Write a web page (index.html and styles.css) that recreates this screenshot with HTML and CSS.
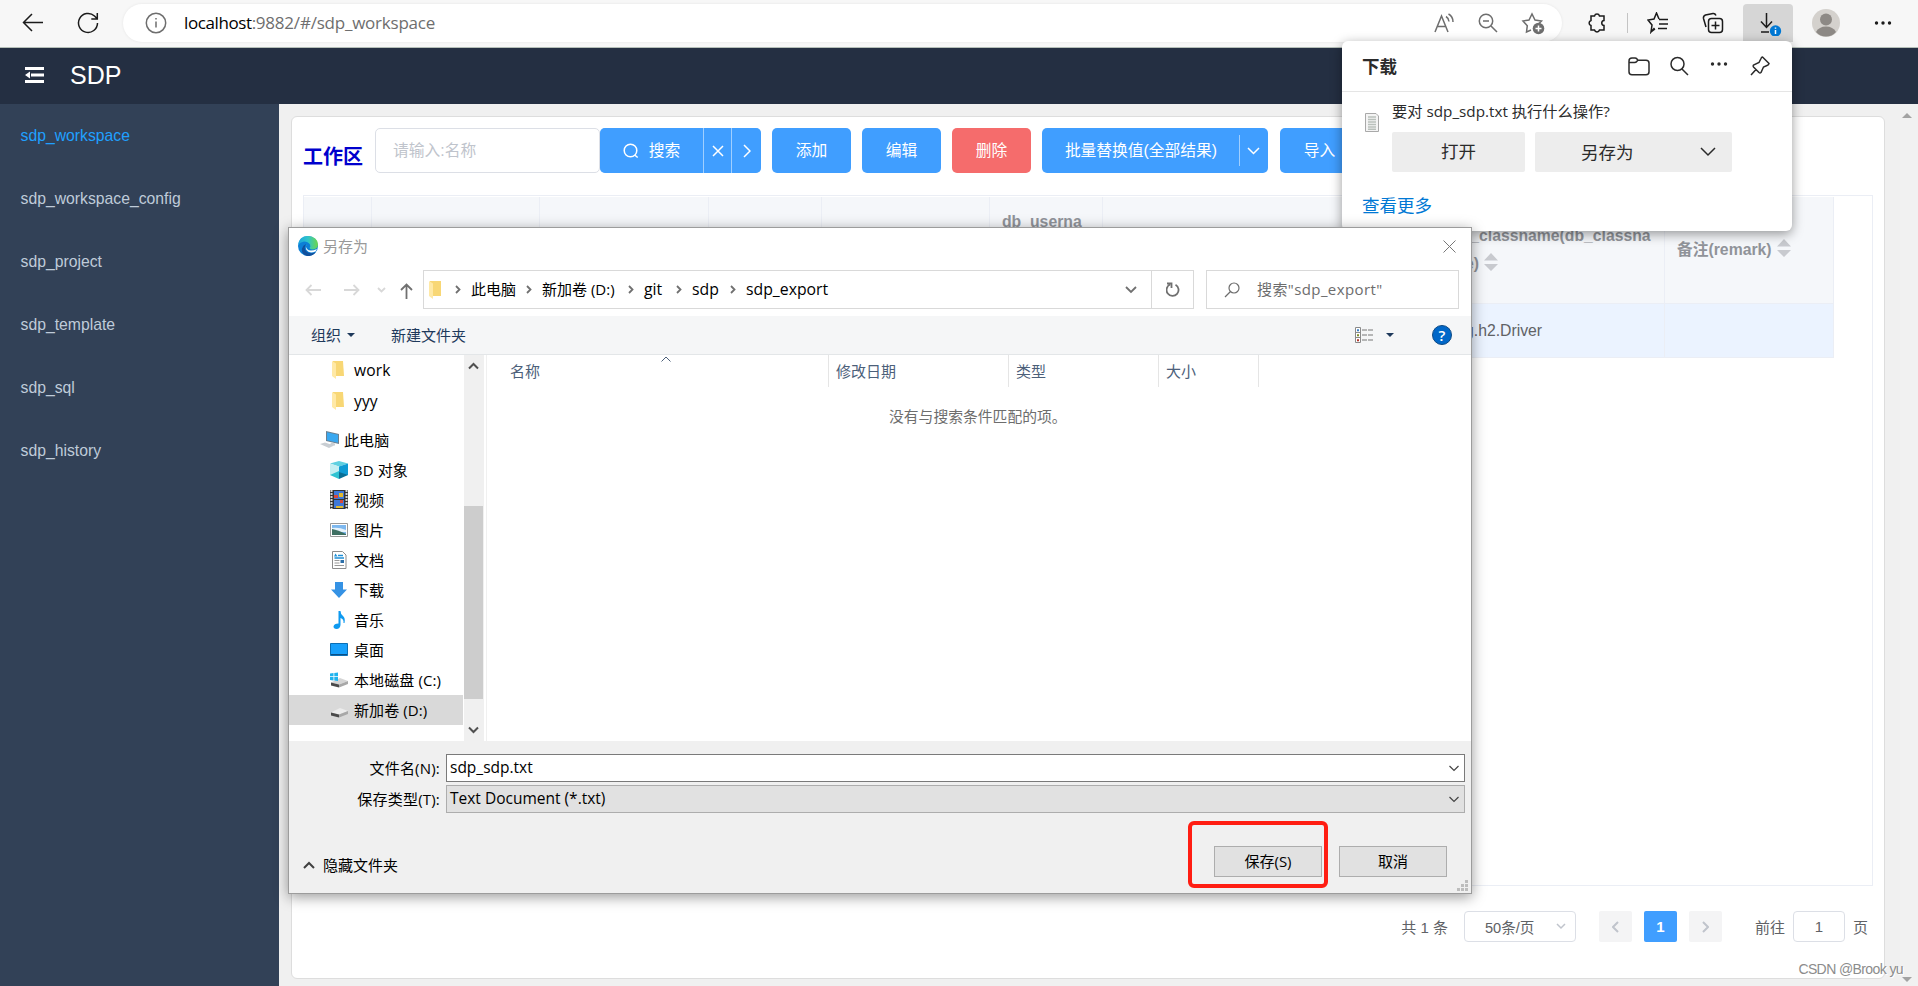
FILE: index.html
```html
<!doctype html>
<html lang="zh-CN">
	<head>
		<title>SDP</title>
		<meta charset="utf-8">
		<link rel="stylesheet" href="styles.css">
	</head>

	<body>
		<!-- BROWSER BAR -->
		<div class="browser">
			<svg class="b-back" width="22" height="22" viewBox="0 0 22 22"><path d="M21 10.500H2M10 2L1.500 10.500l8.500 8.500"/></svg>
			<svg class="b-reload" width="22" height="22" viewBox="0 0 22 22"><path d="M20.500 11a9.500 9.500 0 1 1-3-7l2.500 2.500M20.300 1v6h-6"/></svg>
			<div class="address">
				<svg width="22" height="22" viewBox="0 0 22 22"><circle cx="11" cy="11" r="9.700"/><path d="M11 9.500v6M11 6v1.500"/></svg>
				<span class="url"><b>localhost</b>:9882/#/sdp_workspace</span>
				<div class="address-icons">
					<svg width="22" height="22" viewBox="0 0 22 22"><path d="M2 20L8.500 4 15 20M4.300 14.500h8.500M13 4.500q2.500 1.500 3 5M15.500 2q4.500 2.500 4.500 8"/></svg>
					<svg width="22" height="22" viewBox="0 0 22 22"><circle cx="9" cy="9" r="6.700"/><path d="M14 14l6 6M6 9h6"/></svg>
					<svg width="24" height="24" viewBox="0 0 24 24"><path d="M10 19l-4.500 2 .8-6.300L2 10l6-1 3-6 3 6 6.500 1-2.500 2.500"/><circle class="solid" cx="17.500" cy="17.500" r="5.800"/><path class="white" d="M17.500 14.500v6M14.500 17.500h6"/></svg>
				</div>
			</div>
			<div class="browser-icons">
				<svg width="22" height="22" viewBox="0 0 22 22"><path d="M5 4h3.500a2.600 2.600 0 0 1 5 0H18v4.500c-3 .2-3 4.800 0 5V18h-4.500a2.600 2.600 0 0 1-5 0H5v-4.500a2.600 2.600 0 0 1 0-5z"/></svg>
				<i class="b-sep"></i>
				<svg width="22" height="22" viewBox="0 0 22 22"><path d="M7.500 16L4 20l1-7-4-5 6-1 2.500-6L12 7M12 7.500h9M12 12h9M11 16.500h9M8 17l-4 3"/></svg>
				<svg width="22" height="22" viewBox="0 0 22 22"><rect x="6.500" y="6.500" width="14" height="14" rx="3"/><path d="M13.500 9.500v8M9.500 13.500h8M4 15L1.500 6.500Q1 4 3.500 3L11 1.500q2-.3 3 2"/></svg>
				<div class="b-download">
					<svg width="26" height="26" viewBox="0 0 26 26"><path d="M9.500 3v14M4 11.500l5.500 6 5.500-6M4 22h8"/><circle class="blue" cx="18.500" cy="21" r="5.700"/><path class="white" d="M18.500 20v4M18.500 17.500v1.300"/></svg>
				</div>
				<svg class="b-avatar" width="28" height="28" viewBox="0 0 28 28"><circle class="face-bg" cx="14" cy="14" r="14"/><circle class="face" cx="14" cy="10.500" r="6"/><path class="face" d="M4 23q3-5.500 10-5.500T24 23q-4 4.500-10 4.500T4 23z"/></svg>
				<svg class="dots" width="18" height="6" viewBox="0 0 18 6"><circle cx="2.500" cy="3" r="1.700"/><circle cx="9" cy="3" r="1.700"/><circle cx="15.500" cy="3" r="1.700"/></svg>
			</div>
		</div>

		<!-- APP -->
		<div class="header">
			<svg width="19" height="16" viewBox="0 0 19 16"><path d="M0 0h19v3H0zM6 6.500h13v3H6zM0 13h19v3H0zM5 4.500v7L0 8z"/></svg>
			<span>SDP</span>
		</div>

		<div class="app">
			<ul class="sidebar">
				<li class="active">sdp_workspace</li>
				<li>sdp_workspace_config</li>
				<li>sdp_project</li>
				<li>sdp_template</li>
				<li>sdp_sql</li>
				<li>sdp_history</li>
			</ul>

			<div class="content">
				<div class="card">
					<div class="toolbar">
						<h1>工作区</h1>
						<div class="input">请输入:名称</div>
						<div class="btn-group">
							<div class="btn search"><svg width="16" height="16" viewBox="0 0 16 16"><circle cx="7.500" cy="7.500" r="6.300"/><path d="M12 12.200l2.700 2.300"/></svg>搜索</div>
							<div class="btn clear"><svg width="12" height="12" viewBox="0 0 12 12"><path d="M1 1l10 10M11 1L1 11"/></svg></div>
							<div class="btn more"><svg width="8" height="14" viewBox="0 0 8 14"><path d="M1 1l6 6-6 6"/></svg></div>
						</div>
						<div class="btn">添加</div>
						<div class="btn">编辑</div>
						<div class="btn danger">删除</div>
						<div class="btn batch"><span>批量替换值(全部结果)</span><i></i><svg width="13" height="8" viewBox="0 0 13 8"><path d="M1 1l5.500 5.500L12 1"/></svg></div>
						<div class="btn">导入</div>
					</div>

					<div class="table-wrap">
						<table>
							<colgroup>
								<col class="w68"><col class="w168"><col class="w169"><col class="w113"><col class="w168"><col class="w113"><col class="w336"><col class="w226"><col class="w169">
							</colgroup>
							<tr>
								<th></th><th></th><th></th><th></th><th></th>
								<th>db_username</th>
								<th></th>
								<th>db_classname(db_classname)<svg class="sort" width="14" height="18" viewBox="0 0 14 18"><path d="M0 7.500L7 0l7 7.500zM0 11h14l-7 7z"/></svg></th>
								<th>备注(remark)<svg class="sort" width="14" height="18" viewBox="0 0 14 18"><path d="M0 7.500L7 0l7 7.500zM0 11h14l-7 7z"/></svg></th>
							</tr>
							<tr>
								<td></td><td></td><td></td><td></td><td></td><td></td><td></td>
								<td>org.h2.Driver</td>
								<td></td>
							</tr>
						</table>
					</div>

					<div class="pager">
						<span class="total">共 1 条</span>
						<div class="select">50条/页<svg width="10" height="7" viewBox="0 0 10 7"><path d="M1 1l4 4 4-4"/></svg></div>
						<div class="page"><svg width="7" height="12" viewBox="0 0 7 12"><path d="M6 1L1 6l5 5"/></svg></div>
						<div class="page current">1</div>
						<div class="page"><svg width="7" height="12" viewBox="0 0 7 12"><path d="M1 1l5 5-5 5"/></svg></div>
						<span class="goto">前往</span>
						<div class="jump">1</div>
						<span>页</span>
					</div>
				</div>
			</div>
			<div class="page-scroll"><i class="up"></i><i class="down"></i></div>
		</div>

		<!-- DOWNLOADS -->
		<div class="downloads">
			<div class="dl-head">
				<h2>下载</h2>
				<svg width="22" height="20" viewBox="0 0 22 20"><path d="M1 5q0-3 3-3h3q1.200 0 2 1l1 1.200h8q3 0 3 3v8.500q0 3-3 3H4q-3 0-3-3zM1 6.500h5.500q1.500 0 2.200-1L10 4.200"/></svg>
				<svg width="19" height="20" viewBox="0 0 19 20"><circle cx="7.500" cy="8" r="6.500"/><path d="M12 13l6 6"/></svg>
				<svg class="dots" width="18" height="6" viewBox="0 0 18 6"><circle cx="2.500" cy="3" r="1.700"/><circle cx="9" cy="3" r="1.700"/><circle cx="15.500" cy="3" r="1.700"/></svg>
				<svg width="20" height="20" viewBox="0 0 20 20"><path d="M12.500 1L19 7.500q-.3 1.500-2 2L13.500 11l-2.500 5.500q-1 .8-2 0L3.500 11q-.8-1 0-2L9 6.500 11 2.500Q11.500 1 12.500 1zM6 13.500L1 19"/></svg>
			</div>
			<div class="dl-item">
				<svg width="14" height="19" viewBox="0 0 14 19"><path class="sheet" d="M.5.500h10.500l2.500 2.500v15.500H.5z"/><path class="lines" d="M3 4h8M3 6.500h8M3 9h8M3 11.500h8M3 14h8M3 16.200h8"/></svg>
				<div class="dl-body">
					<p>要对 sdp_sdp.txt 执行什么操作?</p>
					<div class="dl-actions">
						<div class="dl-open">打开</div>
						<div class="dl-save">另存为<svg width="16" height="10" viewBox="0 0 16 10"><path d="M1 1l7 7 7-7"/></svg></div>
					</div>
				</div>
			</div>
			<div class="dl-more">查看更多</div>
		</div>

		<!-- SAVE AS DIALOG -->
		<div class="dialog">
			<div class="dlg-title">
				<svg width="20" height="20" viewBox="0 0 20 20">
					<defs>
						<linearGradient id="eg" x1="0" x2="1"><stop offset="0" stop-color="#1ba3e0"/><stop offset=".5" stop-color="#2fc5c9"/><stop offset="1" stop-color="#6fd64a"/></linearGradient>
					</defs>
					<circle cx="10" cy="10" r="10" fill="#0c7fd6"/>
					<path d="M0 9Q1 0 10 0q9.500.5 10 8.500-.3 4.500-5 5-3 0-3.500-1.500 1.500-1.500.5-3.500Q10 5.500 6 5.500 2 6 0 9z" fill="url(#eg)"/>
					<path d="M8 8q-3 5 1 8 4 2.500 9 0-3 4.500-9 4-6-2-5-7.500Q5 9 8 8z" fill="#11509c"/>
					<path d="M9 8.500q-2 2 0 4.500 3 3 10 0l-1.500 2.500Q11 18 8.500 14 7 11 9 8.500z" fill="#fff"/>
				</svg>
				<span>另存为</span>
				<svg class="close" width="13" height="13" viewBox="0 0 13 13"><path d="M.5.500l12 12M12.500.500l-12 12"/></svg>
			</div>

			<div class="dlg-nav">
				<svg class="off" width="16" height="12" viewBox="0 0 16 12"><path d="M16 6H1.500M6.500 1l-5 5 5 5"/></svg>
				<svg class="off fwd" width="16" height="12" viewBox="0 0 16 12"><path d="M0 6h14.500M9.500 1l5 5-5 5"/></svg>
				<svg class="off recent" width="9" height="6" viewBox="0 0 9 6"><path d="M1 1l3.500 3.500L8 1"/></svg>
				<svg class="upward" width="13" height="16" viewBox="0 0 13 16"><path d="M6.500 16V1.500M1 7l5.500-5.500L12 7"/></svg>
				<div class="path">
					<svg class="folder" width="12" height="18" viewBox="0 0 12 18"><path fill="#f8d775" d="M1 0h11v15H1z"/><path fill="#ffe9a6" d="M0 0l4 2.500V18l-4-3z"/></svg>
					<svg class="gt" width="6" height="9" viewBox="0 0 6 9"><path d="M1 1l3.500 3.500L1 8"/></svg>
					<span class="p1">此电脑</span>
					<svg class="gt" width="6" height="9" viewBox="0 0 6 9"><path d="M1 1l3.500 3.500L1 8"/></svg>
					<span class="p2">新加卷 (D:)</span>
					<svg class="gt" width="6" height="9" viewBox="0 0 6 9"><path d="M1 1l3.500 3.500L1 8"/></svg>
					<span class="p3">git</span>
					<svg class="gt" width="6" height="9" viewBox="0 0 6 9"><path d="M1 1l3.500 3.500L1 8"/></svg>
					<span class="p4">sdp</span>
					<svg class="gt" width="6" height="9" viewBox="0 0 6 9"><path d="M1 1l3.500 3.500L1 8"/></svg>
					<span class="p5">sdp_export</span>
					<svg class="drop" width="12" height="8" viewBox="0 0 12 8"><path d="M1 1l5 5 5-5"/></svg>
					<div class="refresh"><svg width="14" height="15" viewBox="0 0 14 15"><path d="M9.500 2.700A6 6 0 1 1 4 2.500M1 1.500h4.500V6"/></svg></div>
				</div>
				<div class="find">
					<svg width="16" height="16" viewBox="0 0 16 16"><circle cx="10" cy="6" r="5"/><path d="M6.500 9.500L1 15"/></svg>
					<span>搜索"sdp_export"</span>
				</div>
			</div>

			<div class="dlg-cmd">
				<span>组织</span><i class="caret"></i>
				<span class="new">新建文件夹</span>
				<svg class="view" width="18" height="16" viewBox="0 0 18 16"><path d="M.5.500h5v15h-5zM.5 5.500h5M.5 10.500h5" stroke="#8a8a8a" fill="#fff"/><path d="M7 3h5M13 3h5M7 8h5M13 8h5M7 13h5M13 13h5" stroke="#777"/><path fill="#3b7fc4" d="M2 2.200h2v2H2z"/><path fill="#7f8c2a" d="M2 7.200h2v2H2z"/><path fill="#b5352a" d="M2 12.200h2v2H2z"/></svg>
				<i class="caret"></i>
				<div class="help">?</div>
			</div>

			<div class="dlg-main">
				<div class="tree">
					<div class="node folder-node"><svg width="18" height="18" viewBox="0 0 18 18"><path fill="#f8d775" d="M3 0h10l1 15H3z"/><path fill="#ffe9a6" d="M2 0l4 2.500V18l-4-3z"/></svg>work</div>
					<div class="node folder-node"><svg width="18" height="18" viewBox="0 0 18 18"><path fill="#f8d775" d="M3 0h10l1 15H3z"/><path fill="#ffe9a6" d="M2 0l4 2.500V18l-4-3z"/></svg>yyy</div>
					<div class="node root"><svg width="20" height="18" viewBox="0 0 20 18"><path fill="#6b7f8f" d="M6 0l13 3v10L6 10z"/><path fill="#39a8f0" d="M7 1.300l11 2.500v8L7 9.300z"/><path fill="#c9ced3" d="M0 13l5-1.500 9 3L9 17zM11 11.500l4 1v2h-5z"/></svg>此电脑</div>
					<div class="node"><svg width="18" height="18" viewBox="0 0 18 18"><path fill="#5fd0e0" d="M9 0l9 2.500-9 3-9-3z"/><path fill="#c4eef2" d="M0 2.500l9 3V15l-9-1z"/><path fill="#0f9bd4" d="M18 2.500l-9 3V15l9-1z"/><path fill="#2fc3d2" d="M0 14l9-4v8z"/><path fill="#0a6f96" d="M18 14l-9-3v7z"/></svg>3D 对象</div>
					<div class="node"><svg width="18" height="19" viewBox="0 0 18 19"><path fill="#333" d="M0 0h18v19H0z"/><path stroke="#d5d5d5" stroke-width="2" stroke-dasharray="2 1" d="M1.500 0v19M16.500 0v19"/><path fill="#3f78d8" d="M4 1h10v8H4zM4 10h10v8H4z"/><path fill="#d8483a" d="M4 5h4v3H4zM10 10h3v3h-3z"/><path fill="#e3b92c" d="M9 3h4v4H9zM6 16h7v2H6z"/></svg>视频</div>
					<div class="node"><svg width="18" height="14" viewBox="0 0 18 14"><path fill="#fff" stroke="#999" d="M.5.500h17v13H.5z"/><path fill="#7db8ef" d="M2 2h14v10H2z"/><path fill="#e6f2fb" d="M2 5q7-1 14 2v2H2z"/><path fill="#3e6f63" d="M2 6q6 1 14 5v1H2z"/></svg>图片</div>
					<div class="node"><svg width="18" height="18" viewBox="0 0 18 18"><path fill="#fff" stroke="#8c8c8c" d="M2.500.500h10L16 4v13.500H2.500z"/><path stroke="#1f8fd6" d="M8 4.500h5M4.500 7h9.500" stroke-width="1.300"/><path fill="#1f8fd6" d="M4 5.500l1.500-3 2 3z"/><path stroke="#999" d="M4.500 9.500h5M4.500 12h5M4.500 14.500h9.500"/><path fill="#2b6ea8" d="M10.500 9h3.500v3h-3.500z"/></svg>文档</div>
					<div class="node"><svg width="18" height="18" viewBox="0 0 18 18"><path fill="#3592e4" d="M5 1h8v7.500h4L9 17 1 8.500h4z"/></svg>下载</div>
					<div class="node"><svg width="18" height="18" viewBox="0 0 18 18"><path fill="#0f9af0" d="M8.500 0h2q0 3 2.500 5t1.500 7h-1q.5-4-3-5v7q-.5 4-4 4-3-.3-3-2.500.5-3 5-3z"/></svg>音乐</div>
					<div class="node"><svg width="18" height="13" viewBox="0 0 18 13"><path fill="#18a0fb" stroke="#0b6fb5" d="M.5.500h17v12H.5z"/><path stroke="#0a4f86" d="M1 11.500h16"/></svg>桌面</div>
					<div class="node"><svg width="18" height="16" viewBox="0 0 18 16"><path fill="#d5d5d5" d="M1 10.500l9-4.500 8 3-9 3.500z"/><path fill="#4a4a4a" d="M1 10.500l8 2v3l-8-2z"/><path fill="#a8a8a8" d="M9 12.500l9-3.500v3l-9 3.500z"/><path fill="#1fb3ee" d="M0 1.500L3.500 1v3.300H0zM4.300.900L8 .5v3.800H4.300zM0 5.100h3.500v3.400L0 8zM4.300 5.100H8V9l-3.700-.5z"/></svg>本地磁盘 (C:)</div>
					<div class="node selected"><svg width="18" height="16" viewBox="0 0 18 16"><path fill="#ececec" d="M1 10.500l9-4.500 8 3-9 3.500z"/><path fill="#4a4a4a" d="M1 10.500l8 2v3l-8-2z"/><path fill="#a8a8a8" d="M9 12.500l9-3.500v3l-9 3.500z"/></svg>新加卷 (D:)</div>
				</div>
				<div class="tree-scroll">
					<svg width="11" height="8" viewBox="0 0 11 8"><path d="M1 6.500L5.500 2 10 6.500"/></svg>
					<i></i>
					<svg width="11" height="8" viewBox="0 0 11 8"><path d="M1 1.500L5.500 6 10 1.500"/></svg>
				</div>
				<div class="files">
					<div class="cols">
						<span class="c-name">名称<svg width="10" height="6" viewBox="0 0 10 6"><path d="M.5 5.500L5 1l4.500 4.500"/></svg></span>
						<span class="c-date">修改日期</span>
						<span class="c-type">类型</span>
						<span class="c-size">大小</span>
					</div>
					<p>没有与搜索条件匹配的项。</p>
				</div>
			</div>

			<div class="dlg-foot">
				<div class="field">
					<label>文件名(N):</label>
					<div class="combo">sdp_sdp.txt<svg width="10" height="7" viewBox="0 0 10 7"><path d="M.5 1L5 5.500 9.500 1"/></svg></div>
				</div>
				<div class="field">
					<label>保存类型(T):</label>
					<div class="combo gray">Text Document (*.txt)<svg width="10" height="7" viewBox="0 0 10 7"><path d="M.5 1L5 5.500 9.500 1"/></svg></div>
				</div>
				<div class="actions">
					<svg width="12" height="8" viewBox="0 0 12 8"><path d="M1 7l5-5 5 5"/></svg>
					<span>隐藏文件夹</span>
					<div class="win-btn save">保存(S)</div>
					<div class="win-btn">取消</div>
				</div>
				<svg class="grip" width="11" height="11" viewBox="0 0 11 11"><path d="M8 0h3v3H8zM4 4h3v3H4zM8 4h3v3H8zM0 8h3v3H0zM4 8h3v3H4zM8 8h3v3H8z"/></svg>
			</div>
			<div class="mark"></div>
		</div>

		<div class="watermark">CSDN @Brook yu</div>
	</body>
</html>
```
FILE: styles.css
```css
html, body {
	width:100%;
	height:100%;
	margin:0;
	padding:0;
	overflow:hidden;
}

body {
	display:flex;
	flex-direction:column;
	position:relative;
	font-family:"Liberation Sans", "Noto Sans CJK SC", sans-serif;
	font-size:15.75px;
	color:#606266;
}

* {
	box-sizing:border-box;
}

h1, h2, p, ul {
	margin:0;
	padding:0;
}

svg {
	display:block;
	flex:none;
	fill:none;
	stroke:currentColor;
	stroke-width:1.5;
}

/* browser bar */
.browser {
	flex:none;
	height:48px;
	display:flex;
	align-items:flex-start;
	padding:4px 26px 0 22px;
	background:#f7f7f7;
	border-bottom:1px solid #b5bfb8;
	color:#1b1b1b;
}

.b-back, .b-reload {
	margin-top:8px;
}

.b-reload {
	margin-left:33px;
}

.address {
	width:1439px;
	height:38px;
	margin-left:24px;
	padding:0 17px 0 22px;
	display:flex;
	align-items:center;
	background:#ffffff;
	border-radius:19px;
	box-shadow:0 0 3px rgba(0,0,0,0.08);
	color:#6e6e6e;
}

.url {
	margin:-2px 0 0 17px;
	font-family:"Open Sans", sans-serif;
	font-size:17px;
	letter-spacing:-0.22px;
}

.url b {
	font-weight:normal;
	color:#000000;
	letter-spacing:-0.4px;
}

.address-icons {
	margin-left:auto;
	display:flex;
	align-items:center;
	gap:22px;
}

.solid {
	fill:#6e6e6e;
	stroke:none;
}

.blue {
	fill:#0078d4;
	stroke:none;
}

.white {
	stroke:#ffffff;
}

.browser-icons {
	margin-left:auto;
	height:38px;
	display:flex;
	align-items:center;
}

.b-sep {
	width:1px;
	height:20px;
	margin:0 19px;
	background:#c4c4c4;
}

.b-sep + svg {
	margin-right:33px;
}

.b-download {
	width:50px;
	height:38px;
	margin:0 19px;
	padding:6px 0 0 14px;
	background:#d6d6d6;
	border-radius:4px 4px 0 0;
}

.b-avatar {
	margin-right:34px;
}

.face-bg {
	fill:#d4d1cd;
	stroke:none;
}

.face {
	fill:#8d8985;
	stroke:none;
}

.dots {
	fill:currentColor;
	stroke:none;
}

/* app */
.header {
	flex:none;
	height:56px;
	display:flex;
	align-items:center;
	padding-left:25px;
	background:#242f42;
	color:#ffffff;
	font-size:25px;
}

.header svg {
	fill:#ffffff;
	stroke:none;
	margin-top:-2px;
}

.header span {
	margin:-2px 0 0 26px;
}

.app {
	flex:1;
	min-height:0;
	display:flex;
	background:#f0f0f0;
}

.sidebar {
	flex:none;
	width:279px;
	list-style:none;
	background:#324157;
	color:#bfcbd9;
}

.sidebar li {
	height:63px;
	padding-left:20.5px;
	line-height:63px;
}

.sidebar .active {
	color:#20a0ff;
}

.content {
	flex:1;
	min-width:0;
	padding:12px 15px 7px 12px;
}

.card {
	height:100%;
	display:flex;
	flex-direction:column;
	padding:11px 11px 36px;
	background:#ffffff;
	border:1px solid #dddddd;
	border-radius:6px;
}

.toolbar {
	flex:none;
	height:45px;
	display:flex;
	gap:11px;
	line-height:45px;
	white-space:nowrap;
}

.toolbar h1 {
	width:61px;
	margin-top:7px;
	font-size:20px;
	color:#0000cd;
}

.input {
	width:225px;
	padding-left:17px;
	border:1px solid #dcdfe6;
	border-radius:5px;
	line-height:43px;
	color:#c0c4cc;
}

.btn-group {
	display:flex;
	gap:1px;
	width:161px;
	margin-left:-11px;
	background:#a0cfff;
	border-radius:5px;
	overflow:hidden;
}

.btn {
	flex:none;
	width:79px;
	display:flex;
	align-items:center;
	justify-content:center;
	background:#409eff;
	border-radius:5px;
	color:#ffffff;
}

.btn-group .btn {
	border-radius:0;
}

.btn-group .search {
	width:103px;
	gap:10px;
}

.btn-group .clear {
	width:27px;
}

.btn-group .more {
	width:29px;
}

.btn.danger {
	background:#f56c6c;
}

.btn.batch {
	width:226px;
	margin-right:1px;
}

.batch i {
	width:1px;
	height:31px;
	margin:0 7px 0 22px;
	background:#a0cfff;
}

.batch span {
	margin-left:15px;
}

.table-wrap {
	flex:1;
	min-height:0;
	margin:22px 0 25px;
	padding-top:1px;
	border:1px solid #ebeef5;
}

table {
	width:1530px;
	table-layout:fixed;
	border-collapse:separate;
	border-spacing:0;
}

.w68 { width:68px; }
.w113 { width:113px; }
.w168 { width:168px; }
.w169 { width:169px; }
.w226 { width:226px; }
.w336 { width:336px; }

th, td {
	padding:0 11px 0 12px;
	border-right:1px solid #ebeef5;
	border-bottom:1px solid #ebeef5;
	text-align:left;
	word-break:break-all;
}

th {
	height:107px;
	background:#f5f7fa;
	color:#909399;
	line-height:28px;
}

td {
	height:54px;
	background:#ebf3ff;
}

th:nth-child(6) {
	padding-bottom:28px;
}

.sort {
	display:inline-block;
	margin-left:5px;
	vertical-align:-2px;
	fill:#c8cacf;
	stroke:none;
}

.pager {
	flex:none;
	height:31px;
	display:flex;
	align-items:center;
	padding-right:5px;
	font-size:15px;
	justify-content:flex-end;
}

.total {
	margin-right:16px;
}

.select {
	width:112px;
	height:31px;
	margin-right:23px;
	padding:0 9px 0 20px;
	display:flex;
	align-items:center;
	justify-content:space-between;
	border:1px solid #dcdfe6;
	border-radius:4px;
	font-size:14.6px;
}

.select svg {
	color:#c0c4cc;
}

.page {
	width:33px;
	height:31px;
	margin-right:12px;
	display:flex;
	align-items:center;
	justify-content:center;
	background:#f4f4f5;
	border-radius:2px;
	color:#c0c4cc;
	font-weight:bold;
}

.page.current {
	background:#409eff;
	color:#ffffff;
}

.page svg {
	stroke-width:2;
}

.goto {
	margin:0 8px 0 21px;
}

.jump {
	width:52px;
	height:31px;
	margin-right:8px;
	border:1px solid #dcdfe6;
	border-radius:4px;
	line-height:29px;
	text-align:center;
}

.page-scroll {
	width:18px;
	display:flex;
	flex-direction:column;
	align-items:center;
	justify-content:space-between;
	padding:9px 4px 4px 0;
	background:#f1f1f1;
}

.page-scroll i {
	border:5px solid transparent;
}

.page-scroll .up {
	border-top:0;
	border-bottom-color:#a3a3a3;
}

.page-scroll .down {
	border-bottom:0;
	border-top-color:#a3a3a3;
}

/* downloads popup */
.downloads {
	position:absolute;
	left:1342px;
	top:41px;
	width:450px;
	height:190px;
	background:#ffffff;
	border-radius:6px;
	box-shadow:0 3px 12px rgba(0,0,0,0.4);
	color:#2b2b2b;
	font-family:"Open Sans", "Noto Sans CJK SC", sans-serif;
	white-space:nowrap;
}

.dl-head {
	height:51px;
	display:flex;
	align-items:center;
	padding:0 22px 0 20px;
	border-bottom:1px solid #e5e5e5;
	gap:20px;
}

.dl-head h2 {
	margin:-2px auto 0 0;
	font-size:17.5px;
}

.dl-head .dots {
	margin:-4px 2px 0 1px;
}

.dl-item {
	display:flex;
	padding:6px 0 0 23px;
	gap:13px;
}

.dl-item > svg {
	margin-top:15px;
}

.sheet {
	fill:#f4f4f4;
	stroke:#a9a9a9;
	stroke-width:1;
}

.lines {
	stroke:#b9c0bb;
}

.dl-body p {
	height:28px;
	line-height:26px;
	font-size:15.25px;
}

.dl-actions {
	display:flex;
	gap:10px;
	margin-top:6px;
	font-size:17.5px;
	line-height:38px;
}

.dl-open, .dl-save {
	width:133px;
	height:40px;
	background:#ededed;
	border-radius:2px;
	text-align:center;
}

.dl-save {
	width:197px;
	display:flex;
	align-items:center;
	justify-content:space-between;
	padding:0 16px 0 46px;
}

.dl-more {
	padding:20px 0 0 20px;
	font-size:17.5px;
	line-height:26px;
	color:#0078d4;
}

/* save as dialog */
.dialog {
	position:absolute;
	left:288px;
	top:227px;
	width:1184px;
	height:667px;
	display:flex;
	flex-direction:column;
	background:#ffffff;
	border:1px solid #9c9c9c;
	box-shadow:0 3px 13px rgba(0,0,0,0.4);
	color:#000000;
	font-family:"Open Sans", "Noto Sans CJK SC", sans-serif;
	font-size:15px;
	line-height:22px;
	white-space:nowrap;
}

.dlg-title {
	height:38px;
	display:flex;
	align-items:center;
	padding:0 15px 2px 9px;
	color:#999999;
}

.dlg-title > svg:first-child {
	stroke:none;
}

.dlg-title span {
	margin-left:5px;
}

.dlg-title .close {
	margin-left:auto;
	stroke-width:1;
	color:#777777;
}

.dlg-nav {
	height:50px;
	display:flex;
	align-items:center;
	padding:0 12px 3px 16px;
	color:#707070;
}

.dlg-nav svg {
	stroke-width:1.8;
}

.dlg-nav .off {
	color:#d8d8d8;
}

.fwd {
	margin-left:23px;
}

.recent {
	margin-left:17px;
}

.upward {
	margin:3px 0 0 14px;
}

.path {
	width:771px;
	height:39px;
	margin-left:10px;
	padding-left:5px;
	display:flex;
	align-items:center;
	border:1px solid #d9d9d9;
	color:#000000;
}

.path svg {
	color:#707070;
}

.path span {
	margin-top:-1px;
}

.path .folder {
	stroke:none;
	margin-right:4px;
}

.gt {
	margin:0 10px;
}

.p1 { width:45px; }
.p2 { width:76px; }
.p3 { width:22px; }
.p4 { width:28px; }

.p3, .p4, .p5 {
	font-size:15.8px;
}

.drop {
	margin:0 14px 0 auto;
}

.refresh {
	width:42px;
	height:37px;
	padding:11px 14px;
	border-left:1px solid #d9d9d9;
}

.find {
	flex:1;
	height:39px;
	margin-left:12px;
	padding-left:17px;
	display:flex;
	align-items:center;
	gap:17px;
	border:1px solid #d9d9d9;
	color:#6d6d6d;
	letter-spacing:0.4px;
}

.find span {
	margin-top:-1px;
}

.find svg {
	stroke-width:1.2;
}

.dlg-cmd {
	height:39px;
	display:flex;
	align-items:center;
	padding:0 19px 0 22px;
	background:#f5f6f7;
	border-bottom:1px solid #e3e6e8;
	color:#1e395b;
}

.caret {
	margin-left:6px;
	border:4px solid transparent;
	border-top-color:#1e395b;
	border-bottom:0;
}

.new {
	margin-left:36px;
}

.view {
	margin:0 7px 0 auto;
	stroke:none;
	stroke-width:1;
}

.help {
	width:20px;
	height:20px;
	margin-left:38px;
	border:1px solid #0d4a85;
	border-radius:50%;
	background:#0067c8;
	color:#ffffff;
	font-weight:600;
	font-size:15px;
	line-height:18px;
	text-align:center;
}

.dlg-main {
	height:386px;
	display:flex;
}

.tree {
	width:174px;
	margin-right:1px;
	overflow:hidden;
}

.node {
	height:30px;
	display:flex;
	align-items:center;
	padding:0 0 1px 41px;
	gap:6px;
	letter-spacing:0.1px;
}

.node svg {
	width:18px;
	stroke:none;
	stroke-width:1;
}

.folder-node {
	height:31px;
	font-size:15.6px;
}

.root {
	height:30px;
	margin:8px 0 0;
	padding-left:31px;
	gap:4px;
}

.root svg {
	width:20px;
}

.selected {
	background:#d9d9d9;
}

.tree-scroll {
	width:20px;
	display:flex;
	flex-direction:column;
	align-items:center;
	padding:7px 1px 7px 0;
	background:#f0f0f0;
	color:#505050;
}

.tree-scroll svg {
	stroke-width:2;
}

.tree-scroll i {
	width:19px;
	height:193px;
	margin:136px 0 auto;
	background:#cdcdcd;
}

.files {
	flex:1;
	margin-left:2px;
	border-left:1px solid #f0f0f0;
}

.cols {
	height:32px;
	display:flex;
	color:#4c607a;
	line-height:32px;
}

.cols span {
	border-right:1px solid #e5e5e5;
	padding-left:7px;
}

.cols .c-name {
	width:342px;
	padding-left:23px;
	display:flex;
}

.c-name svg {
	margin:1px 0 0 121px;
	stroke-width:1;
}

.c-date { width:180px; }
.c-type { width:150px; }
.c-size { width:100px; }

.files p {
	margin-top:18px;
	padding-left:402px;
	font-size:14.8px;
	color:#6d6d6d;
}

.dlg-foot {
	flex:1;
	padding:13px 6px 0 14px;
	background:#f0f0f0;
}

.field {
	display:flex;
	margin-bottom:3px;
}

.field label {
	width:137px;
	margin-right:6px;
	line-height:28px;
	text-align:right;
	letter-spacing:0.2px;
}

.combo {
	flex:1;
	height:28px;
	display:flex;
	align-items:center;
	justify-content:space-between;
	padding:0 5px 2px 3px;
	border:1px solid #7a7a7a;
	background:#ffffff;
	font-size:15.5px;
}

.combo svg {
	margin-top:2px;
	stroke-width:1.2;
	color:#444444;
}

.combo.gray {
	background:#e1e1e1;
	border-color:#adadad;
}

.actions {
	display:flex;
	align-items:center;
	margin-top:33px;
	padding-right:18px;
}

.actions svg {
	margin-top:7px;
	stroke-width:2;
	color:#404040;
}

.actions span {
	margin:7px auto 0 8px;
}

.win-btn {
	width:108px;
	height:31px;
	border:1px solid #adadad;
	background:#e1e1e1;
	line-height:29px;
	text-align:center;
}

.win-btn.save {
	margin-right:17px;
}

.grip {
	margin:3px -3px 0 auto;
	fill:#bdbdbd;
	stroke:none;
}

.mark {
	position:absolute;
	left:899px;
	top:593px;
	width:140px;
	height:67px;
	border:4px solid #ff1d12;
	border-radius:6px;
}

.watermark {
	position:absolute;
	right:15px;
	bottom:9px;
	font-size:14px;
	line-height:16px;
	letter-spacing:-0.6px;
	color:#8c8c8c;
	text-shadow:1px 1px 0 #ffffff;
}
```
